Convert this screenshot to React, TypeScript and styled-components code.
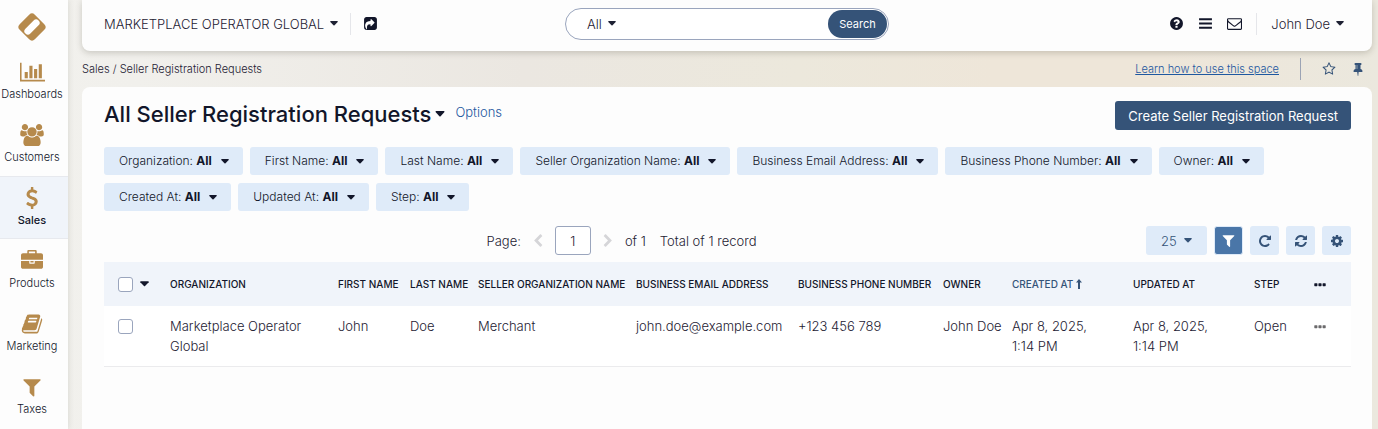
import React from "react";
import styled, { createGlobalStyle, css } from "styled-components";

const color = {
  ink: "#12162a",
  text: "#1e2133",
  gold: "#b68a4c",
  navy: "#355378",
  link: "#1e58a0",
  pale: "#dfebf9",
  head: "#f0f4fa",
  line: "#e7e9ee",
  surface: "#fdfdfd",
  field: "#9aa5bd",
};

const GlobalStyle = createGlobalStyle`
  *, *::before, *::after { box-sizing: border-box; }
  body {
    margin: 0;
    font-family: Inter, "Liberation Sans", sans-serif;
    font-size: 13px;
    font-weight: 300;
    line-height: 20px;
    color: ${color.text};
    background: linear-gradient(90deg, #f2f1ed 0%, #f1f0ec 10%, #ebe7e1 38%, #ece8dc 58%, #eee6d9 72%, #eee6d9 84%, #ebe8de 100%);
  }
  button, input, select { font: inherit; color: inherit; margin: 0; }
  button { cursor: pointer; white-space: nowrap; }
`;

/* ---------- icons ---------- */

const paths = {
  chart: "M640 896v512h-256v-512h256zm384-512v1024h-256v-1024h256zm1024 1152v128h-2048v-1536h128v1408h1920zm-640-896v768h-256v-768h256zm384-384v1152h-256v-1152h256z",
  users: "M593 896q-162 5-265 128h-134q-82 0-138-40.5t-56-118.5q0-353 124-353 6 0 43.5 21t97.5 42.5 119 21.5q67 0 133-23-5 37-5 66 0 139 81 256zm1071 637q0 120-73 189.5t-194 69.5h-874q-121 0-194-69.5t-73-189.5q0-53 3.5-103.5t14-109 26.5-108.5 43-97.5 62-81 85.5-53.5 111.5-20q10 0 43 21.5t73 48 107 48 135 21.5 135-21.5 107-48 73-48 43-21.5q61 0 111.5 20t85.5 53.5 62 81 43 97.5 26.5 108.5 14 109 3.5 103.5zm-1024-1277q0 106-75 181t-181 75-181-75-75-181 75-181 181-75 181 75 75 181zm704 384q0 159-112.5 271.5t-271.5 112.5-271.5-112.5-112.5-271.5 112.5-271.5 271.5-112.5 271.5 112.5 112.5 271.5zm576 225q0 78-56 118.5t-138 40.5h-134q-103-123-265-128 81-117 81-256 0-29-5-66 66 23 133 23 59 0 119-21.5t97.5-42.5 43.5-21q124 0 124 353zm-128-609q0 106-75 181t-181 75-181-75-75-181 75-181 181-75 181 75 75 181z",
  dollar: "M1362 1185q0 153-99.5 263.5t-258.5 136.5v175q0 14-9 23t-23 9h-135q-13 0-22.5-9.5t-9.5-22.5v-175q-66-9-127.5-31t-101.5-44.5-74-48-46.5-37.5-17.5-18q-17-21-2-41l103-135q7-10 23-12 15-2 24 9l2 2q113 99 243 125 37 8 74 8 81 0 142.5-43t61.5-122q0-28-15-53t-33.5-42-58.5-37.5-66-32-80-32.5q-39-16-61.5-25t-61.5-26.5-62.5-31-56.5-35.5-53.5-42.5-43.5-49-35.5-58-21-66.5-8.5-78q0-138 98-242t255-134v-180q0-13 9.5-22.5t22.5-9.5h135q14 0 23 9t9 23v176q57 6 110.5 23t87 33.5 63.5 37.5 39 29 15 14q17 18 5 38l-81 146q-8 15-23 16-14 3-27-7-3-3-14.5-12t-39-26.5-58.5-32-74.5-26-85.5-11.5q-95 0-155 43t-60 111q0 26 8.5 48t29.5 41.5 39.5 33 56 31 60.5 27 70 27.5q53 20 81 31.5t76 35 75.5 42.5 62 50 53 63.5 31.5 76.5 13 94z",
  briefcase: "M640 256h512v-128h-512v128zm1152 640v480q0 66-47 113t-113 47h-1472q-66 0-113-47t-47-113v-480h672v160q0 26 19 45t45 19h320q26 0 45-19t19-45v-160h672zm-768 0v128h-256v-128h256zm768-480v384h-1792v-384q0-66 47-113t113-47h352v-160q0-40 28-68t68-28h576q40 0 68 28t28 68v160h352q66 0 113 47t47 113z",
  book: "M1703 478q40 57 18 129l-275 906q-19 64-76.5 107.5t-122.5 43.5h-923q-77 0-148.5-53.5t-99.5-131.5q-24-67-2-127 0-4 3-27t4-37q1-8-3-21.5t-3-19.5q2-11 8-21t16.5-23.5 16.5-23.5q23-38 45-91.5t30-91.5q3-10 .5-30t-.5-28q3-11 17-28t17-23q21-36 42-92t25-90q1-9-2.5-32t.5-28q4-13 22-30.5t22-22.5q19-26 42.5-84.5t27.5-96.5q1-8-3-25.5t-2-26.5q2-8 9-18t18-23 17-21q8-12 16.5-30.5t15-35 16-36 19.5-32 26.5-23.5 36-11.5 47.5 5.5l-1 3q38-9 51-9h761q74 0 114 56t18 130l-274 906q-36 119-71.5 153.5t-128.5 34.5h-869q-27 0-38 15-11 16-1 43 24 70 144 70h923q29 0 56-15.5t35-41.5l300-987q7-22 5-57 38 15 59 43zm-1064 2q-4 13 2 22.5t20 9.5h608q13 0 25.5-9.5t16.5-22.5l21-64q4-13-2-22.5t-20-9.5h-608q-13 0-25.5 9.5t-16.5 22.5zm-83 256q-4 13 2 22.5t20 9.5h608q13 0 25.5-9.5t16.5-22.5l21-64q4-13-2-22.5t-20-9.5h-608q-13 0-25.5 9.5t-16.5 22.5z",
  filter: "M1595 295q17 41-14 70l-493 493v742q0 42-39 59-13 5-25 5-27 0-45-19l-256-256q-19-19-19-45v-486l-493-493q-31-29-14-70 17-39 59-39h1280q42 0 59 39z",
  help: "M1024 1376v-192q0-14-9-23t-23-9h-192q-14 0-23 9t-9 23v192q0 14 9 23t23 9h192q14 0 23-9t9-23zm256-672q0-88-55.5-163t-138.5-116-170-41q-243 0-371 213-15 24 8 42l132 100q7 6 19 6 16 0 25-12 53-68 86-92 34-24 86-24 48 0 85.5 26t37.5 59q0 38-20 61t-68 45q-63 28-115.5 86.5t-52.5 125.5v36q0 14 9 23t23 9h192q14 0 23-9t9-23q0-19 21.5-49.5t54.5-49.5q32-18 49-28.5t46-35 44.5-48 28-60.5 12.5-81zm384 192q0 209-103 385.5t-279.5 279.5-385.5 103-385.5-103-279.5-279.5-103-385.5 103-385.5 279.5-279.5 385.5-103 385.5 103 279.5 279.5 103 385.5z",
  bars: "M1664 1280v256h-1536v-256zM1664 768v256h-1536v-256zM1664 256v256h-1536v-256z",
  mail: "M1664 1504v-768q-32 36-69 66-268 206-426 338-51 43-83 67t-86.5 48.5-102.5 24.5h-2q-48 0-102.5-24.5t-86.5-48.5-83-67q-158-132-426-338-37-30-69-66v768q0 13 9.5 22.5t22.5 9.5h1472q13 0 22.5-9.5t9.5-22.5zm0-1051v-24.5l-.5-13-3-12.5-5.5-9-9-7.5-14-2.5h-1472q-13 0-22.5 9.5t-9.5 22.5q0 168 147 284 193 152 401 317 6 5 35 29.5t46 37.5 44.5 31.5 50.5 27.5 43 9h2q20 0 43-9t50.5-27.5 44.5-31.5 46-37.5 35-29.5q208-165 401-317 54-43 100.5-115.5t46.5-131.5zm128-37v1088q0 66-47 113t-113 47h-1472q-66 0-113-47t-47-113v-1088q0-66 47-113t113-47h1472q66 0 113 47t47 113z",
  star: "M1201 1004l306-297-422-62-189-382-189 382-422 62 306 297-73 421 378-199 377 199zm527-357q0 22-26 48l-363 354 86 500q1 7 1 20 0 50-41 50-19 0-40-12l-449-236-449 236q-22 12-40 12-21 0-31.5-14.5t-10.5-35.5q0-6 2-20l86-500-364-354q-25-27-25-48 0-37 56-46l502-73 225-455q19-41 49-41t49 41l225 455 502 73q56 9 56 46z",
  pin: "M800 864v-448q0-14-9-23t-23-9-23 9-9 23v448q0 14 9 23t23 9 23-9 9-23zm672 352q0 26-19 45t-45 19h-429l-51 483q-2 12-10.5 20.5t-20.5 8.5h-1q-27 0-32-27l-76-485h-404q-26 0-45-19t-19-45q0-123 78.5-221.5t177.5-98.5v-512q-52 0-90-38t-38-90 38-90 90-38h640q52 0 90 38t38 90-38 90-90 38v512q99 0 177.5 98.5t78.5 221.5z",
  share: "M1005 1197l352-352q19-19 19-45t-19-45l-352-352q-30-31-69-14-40 17-40 59v160q-119 0-216 19.5t-162.5 51-114 79-76.5 95.5-44.5 109-21.5 111.5-5 110.5q0 181 167 404 11 12 25 12 7 0 13-3 22-9 19-33-44-354 62-473 46-52 130-75.5t224-23.5v160q0 42 40 59 12 5 24 5 26 0 45-19zm659-781v960q0 119-84.5 203.5t-203.5 84.5h-960q-119 0-203.5-84.5t-84.5-203.5v-960q0-119 84.5-203.5t203.5-84.5h960q119 0 203.5 84.5t84.5 203.5z",
  repeat: "M1664 256v448q0 26-19 45t-45 19h-448q-42 0-59-40-17-39 14-69l138-138q-148-137-349-137-104 0-198.5 40.5t-163.5 109.5-109.5 163.5-40.5 198.5 40.5 198.5 109.5 163.5 163.5 109.5 198.5 40.5q119 0 225-52t179-147q7-10 23-12 15 0 25 9l137 138q9 8 9.5 20.5t-7.5 22.5q-109 132-264 204.5t-327 72.5q-156 0-298-61t-245-164-164-245-61-298 61-298 164-245 245-164 298-61q147 0 284.5 55.5t244.5 156.5l130-129q29-31 70-14 39 17 39 59z",
  refresh: "M1639 1056q0 5-1 7-64 268-268 434.5t-478 166.5q-146 0-282.5-55t-243.5-157l-129 129q-19 19-45 19t-45-19-19-45v-448q0-26 19-45t45-19h448q26 0 45 19t19 45-19 45l-137 137q71 66 161 102t187 36q134 0 250-65t186-179q11-17 53-117 8-23 30-23h192q13 0 22.5 9.5t9.5 22.5zm25-800v448q0 26-19 45t-45 19h-448q-26 0-45-19t-19-45 19-45l138-138q-148-137-349-137-134 0-250 65t-186 179q-11 17-53 117-8 23-30 23h-199q-13 0-22.5-9.5t-9.5-22.5v-7q65-268 270-434.5t480-166.5q146 0 284 55.5t245 156.5l130-129q19-19 45-19t45 19 19 45z",
  cog: "M1152 896q0-106-75-181t-181-75-181 75-75 181 75 181 181 75 181-75 75-181zm512-109v222q0 12-8 23t-20 13l-185 28q-19 54-39 91 35 50 107 138 10 12 10 25t-9 23q-27 37-99 108t-94 71q-12 0-26-9l-138-108q-44 23-91 38-16 136-29 186-7 28-36 28h-222q-14 0-24.5-8.5t-11.5-21.5l-28-184q-49-16-90-37l-141 107q-10 9-25 9-14 0-25-11-126-114-165-168-7-10-7-23 0-12 8-23 15-21 51-66.5t54-70.5q-27-50-41-99l-183-27q-13-2-21-12.5t-8-23.5v-222q0-12 8-23t19-13l186-28q14-46 39-92-40-57-107-138-10-12-10-24 0-10 9-23 26-36 98.5-107.5t94.5-71.5q13 0 26 10l138 107q44-23 91-38 16-136 29-186 7-28 36-28h222q14 0 24.5 8.5t11.5 21.5l28 184q49 16 90 37l142-107q9-9 24-9 13 0 25 10 129 119 165 170 7 8 7 22 0 12-8 23-15 21-51 66.5t-54 70.5q26 50 41 98l183 28q13 2 21 12.5t8 23.5z",
  left: "M1427 301l-531 531 531 531q19 19 19 45t-19 45l-166 166q-19 19-45 19t-45-19l-742-742q-19-19-19-45t19-45l742-742q19-19 45-19t45 19l166 166q19 19 19 45t-19 45z",
  right: "M365 301l531 531-531 531q-19 19-19 45t19 45l166 166q19 19 45 19t45-19l742-742q19-19 19-45t-19-45l-742-742q-19-19-45-19t-45 19l-166 166q-19 19-19 45t19 45z",
  dots: "M256 768q0-64 64-64h224q64 0 64 64v192q0 64-64 64h-224q-64 0-64-64zM720 768q0-64 64-64h224q64 0 64 64v192q0 64-64 64h-224q-64 0-64-64zM1184 768q0-64 64-64h224q64 0 64 64v192q0 64-64 64h-224q-64 0-64-64z",
};

type IconName = keyof typeof paths;
const boxWidth: Partial<Record<IconName, number>> = { chart: 2048, users: 1920 };

const Svg = styled.svg`
  display: block;
  flex: none;
  fill: currentColor;
`;

function Icon({ name, size = 14 }: { name: IconName; size?: number }) {
  const w = boxWidth[name] ?? 1792;
  return (
    <Svg viewBox={`0 0 ${w} 1792`} height={size} width={Math.round((size * w) / 1792)} aria-hidden="true">
      <path d={paths[name]} />
    </Svg>
  );
}

const Caret = ({ size = 8 }: { size?: number }) => (
  <Svg viewBox="0 0 16 10" width={size} height={Math.round(size * 0.625)} aria-hidden="true">
    <path d="M1.4 0h13.2q1.4.4.8 1.8L9 8.600q-1 .9-2 0L.6 1.800Q0 .4 1.400 0z" />
  </Svg>
);

const SortArrow = () => (
  <Svg viewBox="0 0 6 10" width={6} height={10} aria-hidden="true">
    <path d="M3 0l3 3.400H4V10H2V3.400H0z" />
  </Svg>
);

/* ---------- shell ---------- */

const Shell = styled.div`
  display: flex;
  min-height: 100vh;
`;

const Sidebar = styled.nav`
  flex: none;
  width: 68px;
  background: ${color.surface};
  box-shadow: 0 0 6px rgba(60, 60, 50, 0.16);
`;

const Logo = styled.a`
  display: flex;
  justify-content: center;
  padding: 13px 4px 0 0;
  height: 50px;
`;

const NavItem = styled.a<{ $active?: boolean }>`
  display: flex;
  flex-direction: column;
  align-items: center;
  gap: 3px;
  height: 63px;
  padding: 10px 4px 0 0;
  border: solid transparent;
  border-width: 1px 0;
  color: ${color.gold};
  text-decoration: none;
  ${(p) =>
    p.$active &&
    css`
      background: ${color.head};
      border-color: ${color.line};
    `}
`;

const NavLabel = styled.span<{ $active?: boolean }>`
  font-size: 11px;
  line-height: 16px;
  font-weight: ${(p) => (p.$active ? 500 : 300)};
  color: ${color.ink};
`;

const Main = styled.div`
  flex: 1;
  min-width: 0;
  display: flex;
  flex-direction: column;
  padding: 0 6px 0 14px;
`;

const TopBar = styled.header`
  display: grid;
  grid-template-columns: 1fr auto 1fr;
  align-items: center;
  height: 51px;
  padding: 0 22px 4px;
  background: ${color.surface};
  border-radius: 0 0 8px 8px;
  box-shadow: 0 2px 6px rgba(60, 55, 40, 0.22);
`;

const Cluster = styled.div<{ $gap: number }>`
  display: flex;
  align-items: center;
  gap: ${(p) => p.$gap}px;
`;

const UserCluster = styled(Cluster)`
  justify-content: flex-end;
  padding-right: 6px;
`;

const PlainButton = styled.button`
  display: inline-flex;
  align-items: center;
  vertical-align: middle;
  gap: 6px;
  padding: 0;
  border: 0;
  background: none;
`;

const IconButton = styled(PlainButton)<{ $tone?: string }>`
  color: ${(p) => p.$tone ?? color.ink};
`;

const Rule = styled.span<{ $tone?: string }>`
  width: 1px;
  height: 22px;
  background: ${(p) => p.$tone ?? "#e5e6ea"};
`;

const SearchForm = styled.form`
  display: flex;
  align-items: center;
  width: 324px;
  height: 32px;
  padding: 0 1px 0 21px;
  border: 1px solid ${color.field};
  border-radius: 16px;
  background: #fff;
`;

const SearchInput = styled.input`
  flex: 1;
  min-width: 0;
  border: 0;
  outline: 0;
  background: none;
`;

const SearchButton = styled.button`
  width: 59px;
  height: 28px;
  padding: 0;
  border: 0;
  border-radius: 14px;
  background: ${color.navy};
  color: #fff;
  font-size: 11px;
  font-weight: 400;
`;

const SubBar = styled.div`
  display: flex;
  align-items: center;
  justify-content: space-between;
  height: 36px;
  padding-right: 7px;
  font-size: 11px;
`;

const CrumbLink = styled.a`
  color: inherit;
  text-decoration: none;
`;

const HelpLink = styled.a`
  color: ${color.link};
`;

/* ---------- content ---------- */

const Panel = styled.main`
  flex: 1;
  padding: 14px 21px 24px 22px;
  background: ${color.surface};
  border-radius: 8px 8px 0 0;
`;

const TitleRow = styled.div`
  display: flex;
  align-items: flex-start;
  justify-content: space-between;
  height: 29px;
`;

const Title = styled.h1`
  margin: 0;
  font-size: 22px;
  line-height: 26px;
  font-weight: 500;
  color: ${color.ink};
`;

const OptionsLink = styled.a`
  padding: 0 0 4px 6px;
  color: ${color.link};
  text-decoration: none;
`;

const PrimaryButton = styled.button`
  height: 29px;
  padding: 0 13px;
  border: 0;
  border-radius: 3px;
  background: ${color.navy};
  color: #fff;
  font-weight: 400;
`;

const Filters = styled.div`
  display: flex;
  flex-wrap: wrap;
  gap: 8px 7px;
  margin-top: 17px;
`;

const FilterButton = styled.button`
  display: inline-flex;
  align-items: center;
  gap: 9px;
  height: 28px;
  padding: 0 14px 0 15px;
  border: 0;
  border-radius: 3px;
  background: ${color.pale};
  color: ${color.ink};
  font-size: 12px;
  b { font-weight: 700; }
`;

const Toolbar = styled.div`
  display: flex;
  align-items: center;
  gap: 7px;
  margin: 15px 0 7px;
`;

const Pager = styled.div`
  flex: 1;
  display: flex;
  align-items: center;
  justify-content: center;
  gap: 10px;
`;

const Total = styled.span`
  padding-left: 4px;
`;

const PageInput = styled.input`
  width: 36px;
  height: 29px;
  padding: 0;
  text-align: center;
  border: 1px solid ${color.field};
  border-radius: 3px;
  background: #fff;
`;

const SelectWrap = styled.label`
  position: relative;
  display: flex;
  align-items: center;
  color: ${color.navy};
`;

const PageSize = styled.select`
  width: 61px;
  height: 29px;
  padding: 0 15px;
  border: 0;
  border-radius: 3px;
  appearance: none;
  background: ${color.pale};
`;

const SelectCaret = styled.span`
  position: absolute;
  right: 15px;
  pointer-events: none;
`;

const ToolButton = styled.button<{ $on?: boolean }>`
  display: grid;
  place-items: center;
  width: 29px;
  height: 29px;
  padding: 0;
  border: ${(p) => (p.$on ? `1px solid ${color.pale}` : "0")};
  border-radius: 3px;
  background: ${(p) => (p.$on ? "#4a76a8" : color.pale)};
  color: ${(p) => (p.$on ? "#fff" : color.navy)};
`;

const Grid = styled.table`
  width: 100%;
  table-layout: fixed;
  border-collapse: collapse;
  background: #fff;
`;

const Th = styled.th<{ $sorted?: boolean }>`
  height: 44px;
  padding: 0 7px;
  background: ${color.head};
  text-align: left;
  white-space: nowrap;
  font-size: 10px;
  font-weight: 500;
  text-transform: uppercase;
  color: ${(p) => (p.$sorted ? color.navy : color.ink)};
`;

const Td = styled.td`
  padding: 10px 7px;
  vertical-align: top;
  border-bottom: 1px solid #ebebed;
`;

const CheckCell = styled.div`
  display: flex;
  align-items: center;
  gap: 7px;
  height: 20px;
  padding-left: 7px;
`;

const Check = styled.input`
  appearance: none;
  width: 15px;
  height: 15px;
  border: 1px solid ${color.field};
  border-radius: 3px;
  background: #fff;
`;

const SortLabel = styled.span`
  display: inline-flex;
  align-items: center;
  gap: 3px;
`;

const nav: { icon: IconName; label: string }[] = [
  { icon: "chart", label: "Dashboards" },
  { icon: "users", label: "Customers" },
  { icon: "dollar", label: "Sales" },
  { icon: "briefcase", label: "Products" },
  { icon: "book", label: "Marketing" },
  { icon: "filter", label: "Taxes" },
];

const filters = [
  "Organization", "First Name", "Last Name", "Seller Organization Name",
  "Business Email Address", "Business Phone Number", "Owner",
  "Created At", "Updated At", "Step",
];

const columns = [
  { name: "Organization", width: 168, value: "Marketplace Operator Global" },
  { name: "First Name", width: 72, value: "John" },
  { name: "Last Name", width: 68, value: "Doe" },
  { name: "Seller Organization Name", width: 158, value: "Merchant" },
  { name: "Business Email Address", width: 162, value: "john.doe@example.com" },
  { name: "Business Phone Number", width: 145, value: "+123 456 789" },
  { name: "Owner", width: 69, value: "John\u00a0Doe" },
  { name: "Created At", width: 121, value: "Apr 8, 2025, 1:14\u00a0PM", sorted: true },
  { name: "Updated At", width: 121, value: "Apr 8, 2025, 1:14\u00a0PM" },
  { name: "Step", width: 58, value: "Open" },
];

export default function App() {
  return (
    <>
      <GlobalStyle />
      <Shell>
        <Sidebar aria-label="Main">
          <Logo href="#" aria-label="Home">
            <Svg viewBox="0 0 28 28" width={28} height={28} color={color.gold} aria-hidden="true">
              <rect x="3.300" y="3.300" width="21.400" height="21.400" rx="4" transform="rotate(45 14 14)" />
              <rect x="4.700" y="10.500" width="18.600" height="7" rx="3.500" transform="rotate(-45 14 14)" fill="#fff" />
            </Svg>
          </Logo>
          {nav.map(({ icon, label }) => (
            <NavItem key={label} href="#" $active={label === "Sales"}>
              <Icon name={icon} size={22} />
              <NavLabel $active={label === "Sales"}>{label}</NavLabel>
            </NavItem>
          ))}
        </Sidebar>

        <Main>
          <TopBar>
            <Cluster $gap={12}>
              <PlainButton>MARKETPLACE OPERATOR GLOBAL <Caret /></PlainButton>
              <Rule />
              <IconButton aria-label="Open shortcuts"><Icon name="share" size={15} /></IconButton>
            </Cluster>
            <SearchForm onSubmit={(e) => e.preventDefault()}>
              <PlainButton type="button">All <Caret /></PlainButton>
              <SearchInput aria-label="Search" />
              <SearchButton type="submit">Search</SearchButton>
            </SearchForm>
            <UserCluster $gap={14}>
              <IconButton aria-label="Help"><Icon name="help" size={15} /></IconButton>
              <IconButton aria-label="Menu"><Icon name="bars" size={15} /></IconButton>
              <IconButton aria-label="Messages"><Icon name="mail" size={15} /></IconButton>
              <Rule />
              <PlainButton>John Doe <Caret /></PlainButton>
            </UserCluster>
          </TopBar>

          <SubBar>
            <nav aria-label="Breadcrumb">
              <CrumbLink href="#">Sales</CrumbLink> / <CrumbLink href="#">Seller Registration Requests</CrumbLink>
            </nav>
            <Cluster $gap={21}>
              <HelpLink href="#">Learn how to use this space</HelpLink>
              <Rule $tone="#9ba3b4" />
              <Cluster $gap={15}>
                <IconButton $tone={color.navy} aria-label="Add to favorites"><Icon name="star" /></IconButton>
                <IconButton $tone={color.navy} aria-label="Pin page"><Icon name="pin" /></IconButton>
              </Cluster>
            </Cluster>
          </SubBar>

          <Panel>
            <TitleRow>
              <Cluster $gap={4}>
                <Title>All Seller Registration Requests</Title>
                <IconButton aria-label="Choose view"><Caret size={10} /></IconButton>
                <OptionsLink href="#">Options</OptionsLink>
              </Cluster>
              <PrimaryButton>Create Seller Registration Request</PrimaryButton>
            </TitleRow>

            <Filters>
              {filters.map((name) => (
                <FilterButton key={name}>
                  <span>{name}: <b>All</b></span>
                  <Caret />
                </FilterButton>
              ))}
            </Filters>

            <Toolbar>
              <Pager>
                <label htmlFor="page">Page:</label>
                <IconButton $tone="#d5d5d8" aria-label="Previous page"><Icon name="left" /></IconButton>
                <PageInput id="page" defaultValue="1" />
                <IconButton $tone="#d5d5d8" aria-label="Next page"><Icon name="right" /></IconButton>
                <span>of 1</span>
                <Total>Total of 1 record</Total>
              </Pager>
              <SelectWrap>
                <PageSize aria-label="Rows per page" defaultValue="25">
                  <option>10</option>
                  <option>25</option>
                  <option>50</option>
                </PageSize>
                <SelectCaret><Caret /></SelectCaret>
              </SelectWrap>
              <ToolButton $on aria-label="Filters"><Icon name="filter" size={15} /></ToolButton>
              <ToolButton aria-label="Reload"><Icon name="repeat" /></ToolButton>
              <ToolButton aria-label="Reset"><Icon name="refresh" /></ToolButton>
              <ToolButton aria-label="Grid settings"><Icon name="cog" /></ToolButton>
            </Toolbar>

            <Grid>
              <colgroup>
                <col width={59} />
                {columns.map((c) => <col key={c.name} width={c.width} />)}
                <col width={46} />
              </colgroup>
              <thead>
                <tr>
                  <Th>
                    <CheckCell>
                      <Check type="checkbox" aria-label="Select all rows" />
                      <IconButton aria-label="Selection options"><Caret size={9} /></IconButton>
                    </CheckCell>
                  </Th>
                  {columns.map((c) => (
                    <Th key={c.name} $sorted={c.sorted} scope="col">
                      {c.sorted ? <SortLabel>{c.name} <SortArrow /></SortLabel> : c.name}
                    </Th>
                  ))}
                  <Th><IconButton aria-label="Column options"><Icon name="dots" size={16} /></IconButton></Th>
                </tr>
              </thead>
              <tbody>
                <tr>
                  <Td><CheckCell><Check type="checkbox" aria-label="Select row" /></CheckCell></Td>
                  {columns.map((c) => <Td key={c.name}>{c.value}</Td>)}
                  <Td><IconButton $tone="#6b6a6c" aria-label="Row actions"><Icon name="dots" size={16} /></IconButton></Td>
                </tr>
              </tbody>
            </Grid>
          </Panel>
        </Main>
      </Shell>
    </>
  );
}
